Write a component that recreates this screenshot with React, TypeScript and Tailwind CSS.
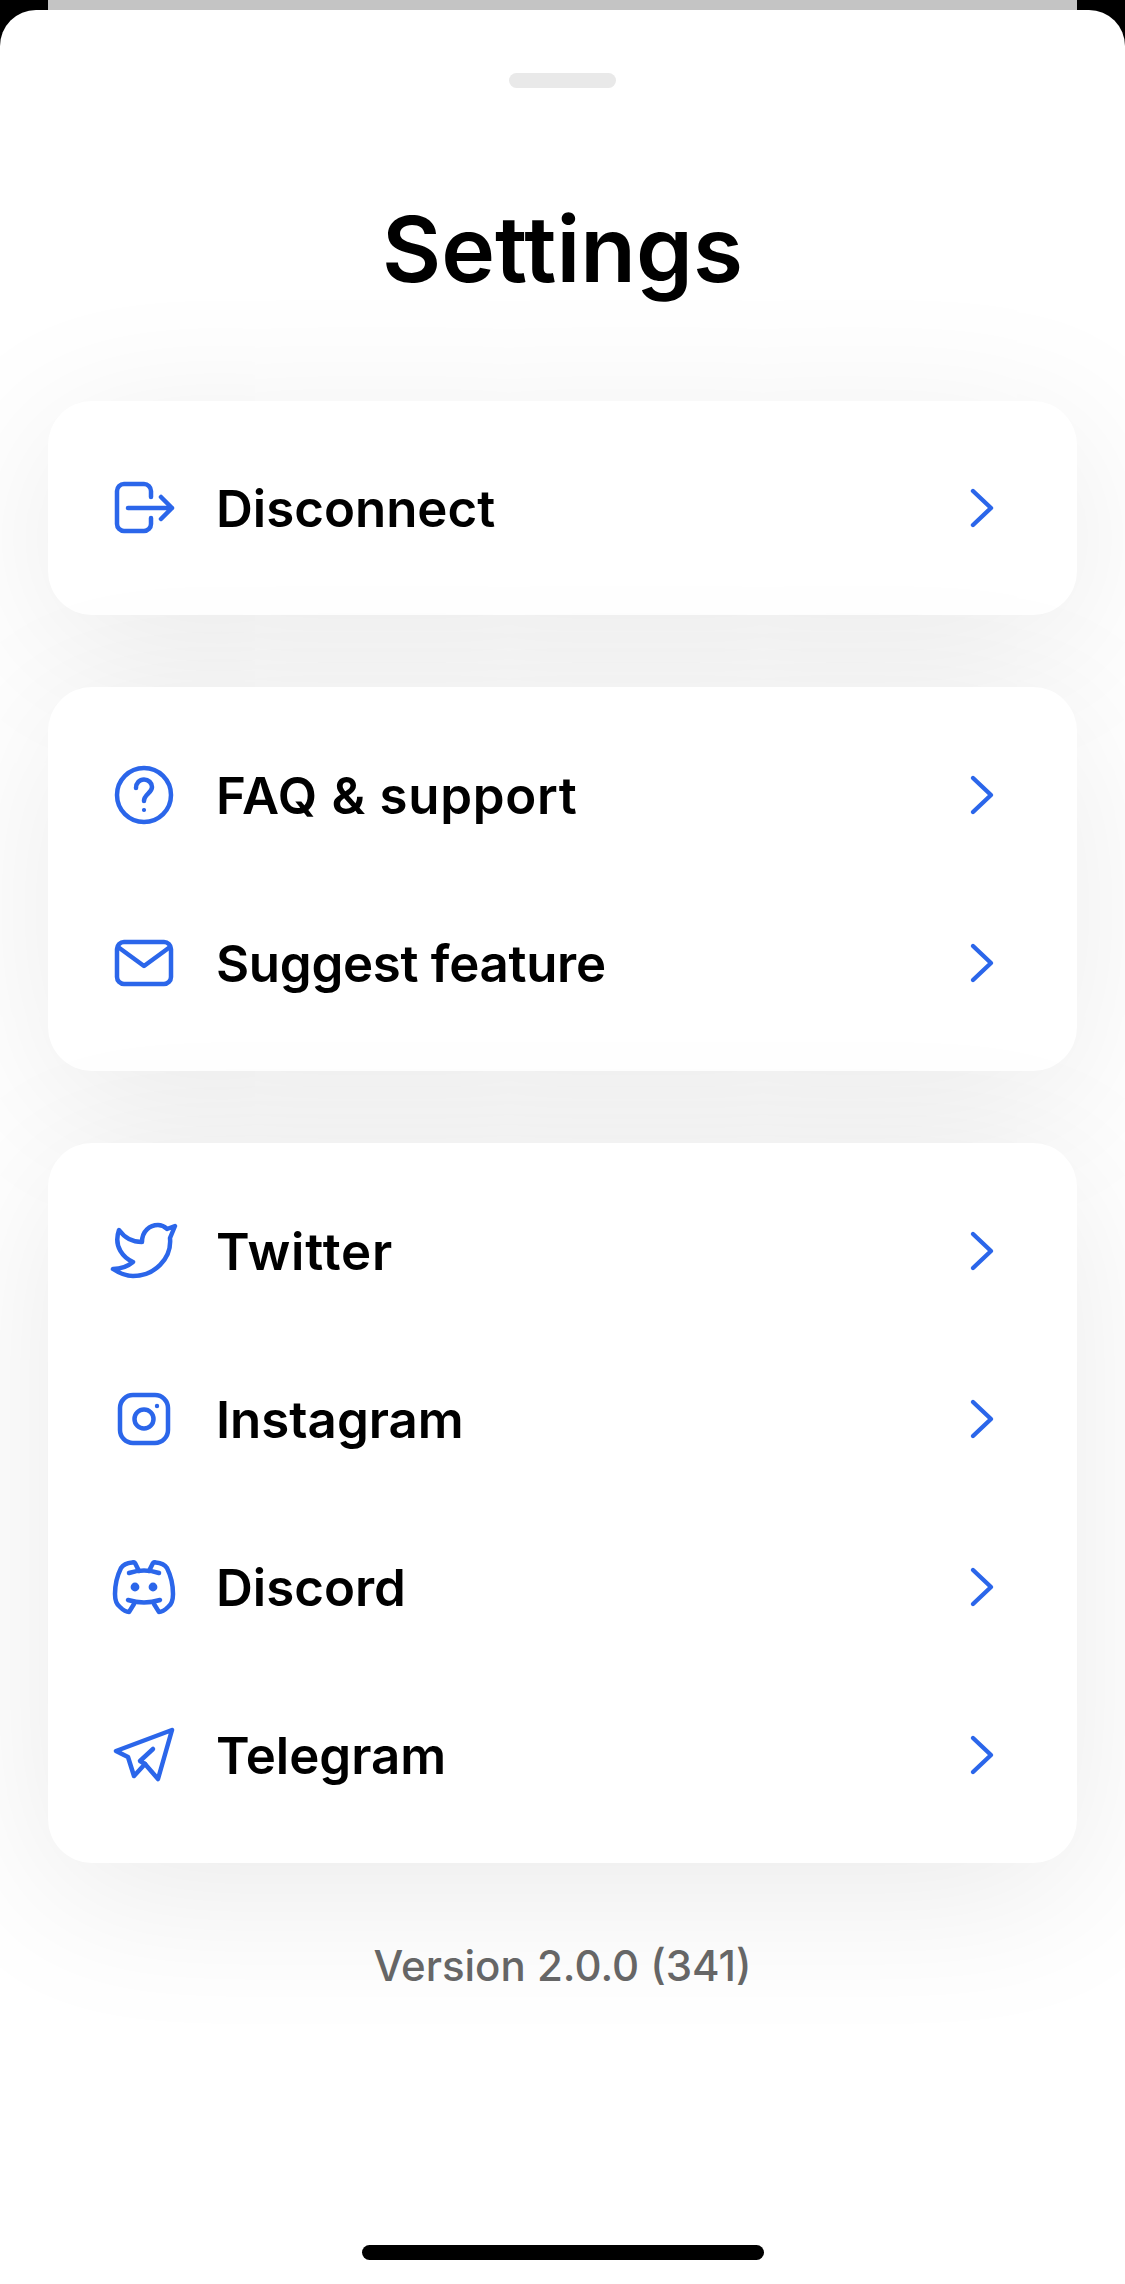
const Blue = "#2B66EA";

function Ic({ children }: { children: React.ReactNode }) {
  return (
    <svg width="68" height="68" viewBox="0 0 68 68" fill="none" stroke={Blue} strokeWidth="4.5" strokeLinecap="round" strokeLinejoin="round" className="shrink-0">
      {children}
    </svg>
  );
}

const icons: Record<string, React.ReactNode> = {
  logout: (
    <Ic>
      <path d="M41 23V17a7 7 0 0 0-7-7H14a7 7 0 0 0-7 7v33a7 7 0 0 0 7 7h20a7 7 0 0 0 7-7v-6" />
      <path d="M18 34h44M51 23l11 11-11 11" />
    </Ic>
  ),
  help: (
    <Ic>
      <circle cx="34" cy="34" r="27" />
      <path d="M26 27c0-5 3.5-8.5 8-8.5s8 3.5 8 7.5c0 6-8 7.5-8 14" />
      <circle cx="34" cy="49" r="1.4" fill={Blue} strokeWidth="1.4" />
    </Ic>
  ),
  mail: (
    <Ic>
      <rect x="7" y="13" width="54" height="42" rx="7" />
      <path d="M8 18l26 19 26-19" />
    </Ic>
  ),
  twitter: (
    <Ic>
      <path d="M9 13C14 20 22 25 32 25C32 14 40 8 48 8C52 8 55 10 57 12L65 9L60 21C62 42 44 59 23 59C15 59 9 56 3 52C10 52 17 50 23 45C14 41 3 30 9 13Z" />
    </Ic>
  ),
  instagram: (
    <Ic>
      <rect x="10" y="10" width="48" height="48" rx="13" />
      <circle cx="34" cy="34" r="9.5" />
      <circle cx="47" cy="21" r="1.2" fill={Blue} strokeWidth="2" />
    </Ic>
  ),
  discord: (
    <Ic>
      <path d="M29 18L25 10Q24 9 22 9.5C17 10 13 12 11 15C7 23 5 33 5 41C5 47 7 52 10 54C13 57 17 59 19 59L24 51" />
      <path d="M39 18L43 10Q44 9 46 9.5C51 10 55 12 57 15C61 23 63 33 63 41C63 47 61 52 58 54C55 57 51 59 49 59L44 51" />
      <path d="M19 20Q34 15 49 20M18 47Q34 52 50 47" />
      <circle cx="25" cy="34" r="3.4" fill={Blue} strokeWidth="2" />
      <circle cx="43" cy="34" r="3.4" fill={Blue} strokeWidth="2" />
    </Ic>
  ),
  telegram: (
    <Ic>
      <path d="M62 9L6 30L18 36L24 55L35 43L48 58Z" />
      <path d="M43 28L30 40L35 43" />
    </Ic>
  ),
};

function Row({ icon, label, track }: { icon: string; label: string; track?: string }) {
  return (
    <div className="flex h-[168px] items-center pl-[62px] pr-[78px]">
      {icons[icon]}
      <span className={`ml-[38px] flex-1 pt-[3px] text-[51px] font-semibold text-black ${track ?? ""}`}>{label}</span>
      <svg width="30" height="44" viewBox="0 0 30 44" fill="none" stroke={Blue} strokeWidth="4.4" strokeLinecap="round" strokeLinejoin="round">
        <path d="M4 5L22 22L4 39" />
      </svg>
    </div>
  );
}

function Card({ className, children }: { className?: string; children: React.ReactNode }) {
  return (
    <section className={`rounded-[44px] bg-white py-[24px] shadow-[0_30px_160px_rgba(0,0,0,0.085)] ${className ?? ""}`}>
      {children}
    </section>
  );
}

export default function App() {
  return (
    <div className="h-[2284px] w-[1125px] overflow-hidden bg-black font-['Inter','Liberation_Sans',sans-serif]">
      <div className="mx-[48px] h-[10px] bg-[#c4c4c4]" />
      <main className="flex h-[2274px] flex-col items-center overflow-hidden rounded-t-[36px] bg-white">
        <div className="mt-[63px] h-[15px] w-[107px] shrink-0 rounded-full bg-[#e9e9e9]" />
        <h1 className="mt-[103px] h-[116px] shrink-0 text-[91px] leading-[116px] font-semibold text-black">Settings</h1>
        <div className="mt-[94px] flex w-[1029px] shrink-0 flex-col gap-[72px]">
          <Card className="!py-[23px]">
            <Row icon="logout" label="Disconnect" />
          </Card>
          <Card>
            <Row icon="help" label="FAQ & support" track="tracking-[0.7px]" />
            <Row icon="mail" label="Suggest feature" track="tracking-[-0.3px]" />
          </Card>
          <Card>
            <Row icon="twitter" label="Twitter" track="tracking-[0.9px]" />
            <Row icon="instagram" label="Instagram" />
            <Row icon="discord" label="Discord" />
            <Row icon="telegram" label="Telegram" />
          </Card>
        </div>
        <p className="relative mt-[78px] shrink-0 text-[42px] leading-[50px] font-medium text-[#666666]">Version 2.0.0 (341)</p>
        <div className="relative mt-[254px] h-[15px] w-[402px] shrink-0 rounded-full bg-black" />
      </main>
    </div>
  );
}
